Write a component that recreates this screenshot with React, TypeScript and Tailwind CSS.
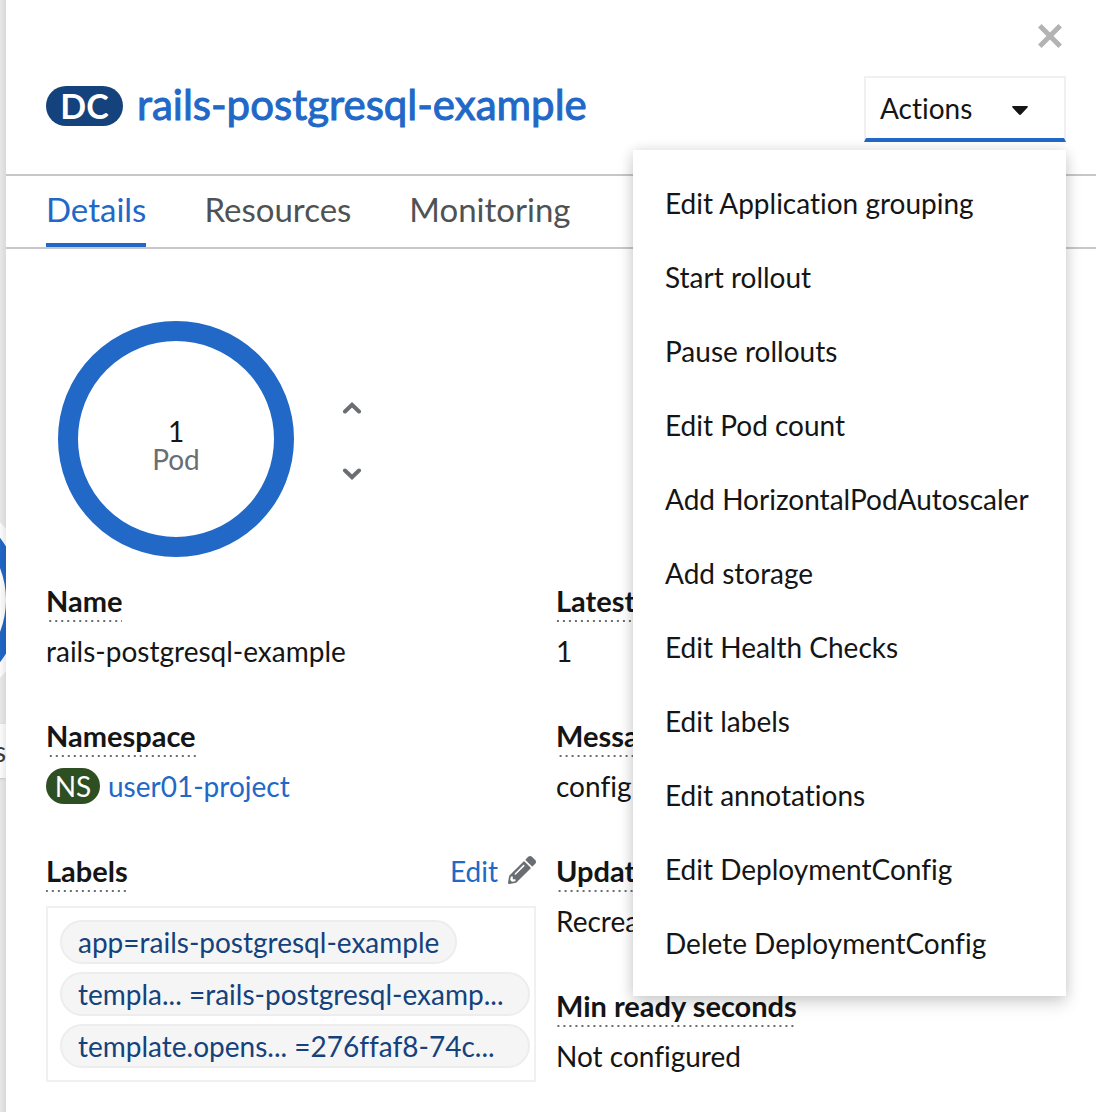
import type { ReactNode } from "react";

const actions = [
  "Edit Application grouping",
  "Start rollout",
  "Pause rollouts",
  "Edit Pod count",
  "Add HorizontalPodAutoscaler",
  "Add storage",
  "Edit Health Checks",
  "Edit labels",
  "Edit annotations",
  "Edit DeploymentConfig",
  "Delete DeploymentConfig",
];

const tabs = ["Details", "Resources", "Monitoring"];

function Term({ children }: { children: ReactNode }) {
  return (
    <dt className="w-fit bg-[linear-gradient(90deg,transparent_4px,#6a6e73_4px)] bg-[length:6px_2px] bg-bottom bg-repeat-x pb-1 text-[29px] font-bold leading-[34px] whitespace-nowrap">
      {children}
    </dt>
  );
}

function Field({ name, children }: { name: string; children: ReactNode }) {
  return (
    <div>
      <Term>{name}</Term>
      <dd className="mt-2 leading-[42px] whitespace-nowrap">{children}</dd>
    </div>
  );
}

function Chip({ children, full }: { children: ReactNode; full?: boolean }) {
  return (
    <li className={full ? "w-full" : "w-fit max-w-full"}>
      <a
        href="#label"
        className="block truncate rounded-full border-2 border-[#ededed] bg-[#f5f5f5] px-4 leading-10 whitespace-pre text-[#14427c]"
      >
        {children}
      </a>
    </li>
  );
}

function TopologyEdge() {
  return (
    <div className="relative w-1.5 shrink-0 overflow-hidden bg-[#ececec]">
      <svg className="absolute top-[480px] left-0" width="6" height="240" viewBox="0 480 6 240" aria-hidden="true">
        <circle cx="-82" cy="600" r="113" fill="#ffffff" />
        <circle cx="-82" cy="600" r="95.500" fill="none" stroke="#2168c7" strokeWidth="15" />
      </svg>
      <div className="absolute top-[724px] right-0 bg-white leading-[54px] text-[#393f44] shadow">s</div>
      <div className="absolute inset-0 bg-linear-to-r from-black/2 to-black/8" />
    </div>
  );
}

export default function App() {
  return (
    <div className="flex min-h-screen overflow-hidden bg-white font-['Lato',sans-serif] text-[28px] text-[#151515] [font-variant-ligatures:none]">
      <TopologyEdge />
      <aside className="min-w-0 flex-1">
        <header className="border-b-2 border-[#c7c7c7] pr-[30px] pb-8 pl-10">
          <div className="flex h-[76px] items-start justify-end pt-6">
            <button type="button" aria-label="Close" className="mr-1 text-[#b3b3b3]">
              <svg width="24" height="24" viewBox="0 0 24 24" aria-hidden="true">
                <path d="M1.800 1.800 22.200 22.200M22.200 1.800 1.800 22.200" stroke="currentColor" strokeWidth="5" />
              </svg>
            </button>
          </div>
          <div className="flex items-start justify-between">
            <h1 className="mt-1.5 flex items-center gap-3.5 leading-11">
              <span className="flex h-10 w-[77px] items-center justify-center rounded-full bg-[#14427c] text-[34px] font-bold text-white">DC</span>
              <a href="#resource" className="pb-1 text-[42px] whitespace-nowrap text-[#2168c7] [-webkit-text-stroke:1px_#2168c7]">
                rails-postgresql-example
              </a>
            </h1>
            <div className="relative">
              <button
                type="button"
                aria-haspopup="menu"
                aria-expanded="true"
                className="flex h-[66px] w-[202px] items-center border-2 border-b-4 border-[#f0f0f0] border-b-[#2168c7] pl-3.5"
              >
                <span className="w-24 text-left">Actions</span>
                <svg className="mt-1 ml-9" width="16" height="9" viewBox="0 0 16 9" aria-hidden="true">
                  <path d="M1 0h14q1.500.5.5 1.500L9 8.500q-1 .8-2 0L.5 1.500Q-.5.5 1 0Z" fill="currentColor" />
                </svg>
              </button>
              <ul role="menu" className="absolute top-[74px] right-0 z-10 w-[433px] bg-white py-4 shadow-[0_8px_16px_rgba(3,3,3,0.14),0_0_12px_rgba(3,3,3,0.12)]">
                {actions.map((action) => (
                  <li key={action} role="none">
                    <button type="button" role="menuitem" className="w-full px-8 py-4 text-left leading-[42px] whitespace-nowrap">
                      {action}
                    </button>
                  </li>
                ))}
              </ul>
            </div>
          </div>
        </header>

        <nav className="flex h-[73px] gap-[58px] border-b-2 border-[#c7c7c7] pl-10 text-[33px]">
          {tabs.map((tab, index) => (
            <a
              key={tab}
              href={`#${tab.toLowerCase()}`}
              aria-current={index === 0 ? "page" : undefined}
              className={
                index === 0
                  ? "border-b-4 border-[#2168c7] leading-[66px] text-[#2168c7]"
                  : "leading-[66px] text-[#4f5255]"
              }
            >
              {tab}
            </a>
          ))}
        </nav>

        <section className="flex items-center gap-12 px-[52px] pt-[72px]">
          <div className="flex size-[236px] flex-col items-center justify-center rounded-full border-20 border-[#2168c7] pt-3 leading-7">
            <span>1</span>
            <span className="text-[#6a6e73]">Pod</span>
          </div>
          <div className="flex flex-col gap-[54px] pt-1 text-[#6a6e73]">
            {["Increase", "Decrease"].map((label) => (
              <button key={label} type="button" aria-label={`${label} the Pod count`}>
                <svg width="20" height="12" viewBox="0 0 20 12" aria-hidden="true">
                  <path
                    d={label === "Increase" ? "M3 9.500 10 2.800 17 9.500" : "M3 2.500 10 9.200 17 2.500"}
                    fill="none"
                    stroke="currentColor"
                    strokeWidth="4"
                    strokeLinecap="round"
                  />
                </svg>
              </button>
            ))}
          </div>
        </section>

        <div className="grid grid-cols-2 gap-5 pt-[27px] pr-[50px] pb-[30px] pl-10">
          <dl className="flex min-w-0 flex-col gap-[47px]">
            <Field name="Name">rails-postgresql-example</Field>
            <Field name="Namespace">
              <span className="flex h-[42px] items-center gap-2">
                <span className="flex h-9 w-[54px] items-center justify-center rounded-full bg-[#2d4f21] text-white">NS</span>
                <a href="#namespace" className="text-[#2168c7]">user01-project</a>
              </span>
            </Field>
            <div>
              <div className="flex justify-between">
                <Term>Labels</Term>
                <dd>
                  <button type="button" className="flex items-center gap-2.5 leading-[34px] text-[#2168c7]">
                    Edit
                    <svg width="28" height="28" viewBox="0 0 512 512" className="mb-0.5 text-[#6a6e73]" aria-hidden="true">
                      <path
                        fill="currentColor"
                        d="M497.900 142.100l-46.100 46.100c-4.700 4.700-12.300 4.700-17 0l-111-111c-4.700-4.700-4.700-12.300 0-17l46.100-46.100c18.700-18.700 49.100-18.700 67.900 0l60.100 60.100c18.800 18.700 18.800 49.100 0 67.900zM284.200 99.800L21.600 362.400.4 483.900c-2.900 16.400 11.400 30.600 27.800 27.800l121.500-21.300 262.600-262.600c4.700-4.700 4.700-12.300 0-17l-111-111c-4.800-4.700-12.400-4.700-17.100 0zM124.100 339.900c-5.500-5.500-5.500-14.300 0-19.800l154-154c5.500-5.500 14.300-5.500 19.800 0s5.500 14.300 0 19.800l-154 154c-5.500 5.500-14.300 5.500-19.800 0zM88 424h48v36.300l-64.500 11.300-31.100-31.100L51.700 376H88v48z"
                      />
                    </svg>
                  </button>
                </dd>
              </div>
              <dd>
                <ul className="mt-3.5 flex flex-col gap-2 border-2 border-[#f0f0f0] py-3 pr-1 pl-3">
                  <Chip>app=rails-postgresql-example</Chip>
                  <Chip full>templa... =rails-postgresql-examp...</Chip>
                  <Chip full>template.opens... =276ffaf8-74c...</Chip>
                </ul>
              </dd>
            </div>
          </dl>
          <dl className="flex min-w-0 flex-col gap-[47px]">
            <Field name="Latest version">1</Field>
            <Field name="Message">config change</Field>
            <Field name="Update strategy">Recreate</Field>
            <Field name="Min ready seconds">Not configured</Field>
          </dl>
        </div>
      </aside>
    </div>
  );
}
